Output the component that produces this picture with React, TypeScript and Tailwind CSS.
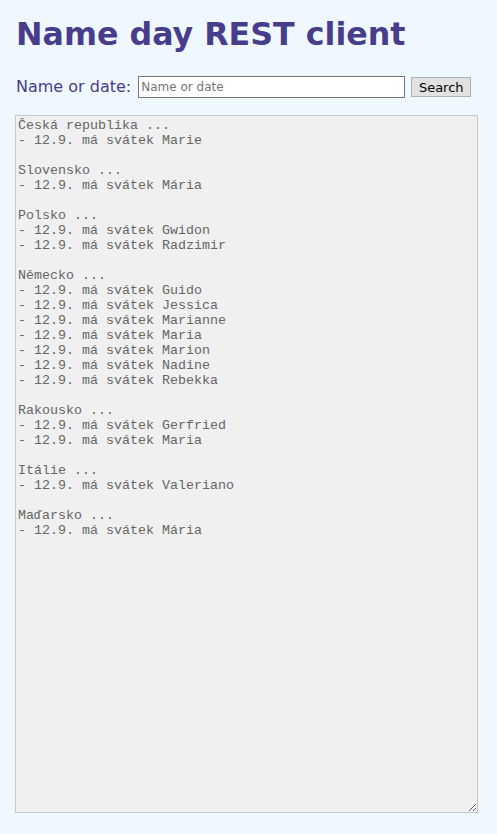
import React from "react";

const results: [string, string[]][] = [
    ["Česká republika", ["Marie"]],
    ["Slovensko", ["Mária"]],
    ["Polsko", ["Gwidon", "Radzimir"]],
    ["Německo", ["Guido", "Jessica", "Marianne", "Maria", "Marion", "Nadine", "Rebekka"]],
    ["Rakousko", ["Gerfried", "Maria"]],
    ["Itálie", ["Valeriano"]],
    ["Maďarsko", ["Mária"]],
];

const text = results.map(([country, names]) => [`${country} ...`, ...names.map((n) => `- 12.9. má svátek ${n}`)].join("\n")).join("\n\n");

const App = () => {
    const [query, setQuery] = React.useState("");

    return (
        <div className="min-h-screen bg-[#f0f8ff] px-4 pt-[14px] pb-4 font-['DejaVu_Sans',Verdana,sans-serif]">
            <h1 className="text-[31.7px] leading-[40px] font-bold text-[#483d8b]">Name day REST client</h1>

            <div className="mt-[22px] flex h-[22px] items-center">
                <label className="shrink-0 whitespace-nowrap text-[16px] text-[#483d8b]">Name or date:</label>
                <input
                    type="text"
                    value={query}
                    onChange={(e) => setQuery(e.target.value)}
                    placeholder="Name or date"
                    className="ml-[7px] h-[22px] w-[267px] shrink-0 border border-[#767676] bg-white px-[2px] text-[12px] text-black placeholder:text-[#757575]"
                />
                <button className="ml-[6px] h-[20px] w-[60px] shrink-0 border border-[#b0b0b0] bg-[#e1e1e1] text-[13px] text-black">Search</button>
            </div>

            <textarea
                readOnly
                value={text}
                className="mt-[17px] -ml-px block h-[698px] w-[463px] border border-[#c8c8c8] bg-[#f0f0f0] px-[2px] py-[2px] font-['Liberation_Mono','Courier_New',monospace] text-[13.33px] leading-[15px] text-[#666] outline-none"
            />
        </div>
    );
};

export default App;
